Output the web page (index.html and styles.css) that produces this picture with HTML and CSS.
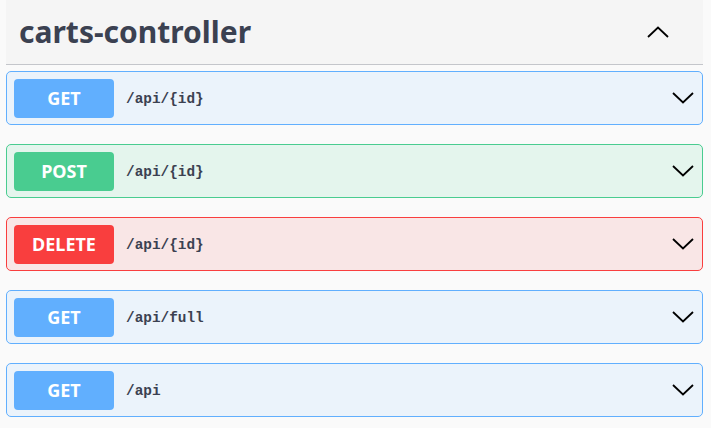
FILE: index.html
```html
<!DOCTYPE html>
<html>
<head>
<meta charset="utf-8">
<link rel="stylesheet" href="styles.css">
</head>
<body>
<div class="tag-section">
  <h3 class="tag-header">
    <span class="tag-name">carts-controller</span>
    <svg class="arrow-up" width="22" height="12" viewBox="0 0 22 12"><polyline points="1,11 11,1.5 21,11" fill="none" stroke="#000" stroke-width="1.8"/></svg>
  </h3>
  <div class="ops">
    <div class="opblock get">
      <span class="method">GET</span>
      <span class="path">/api/{id}</span>
      <svg class="arrow" width="22" height="12" viewBox="0 0 22 12"><polyline points="1,1 11,10.5 21,1" fill="none" stroke="#000" stroke-width="1.8"/></svg>
    </div>
    <div class="opblock post">
      <span class="method">POST</span>
      <span class="path">/api/{id}</span>
      <svg class="arrow" width="22" height="12" viewBox="0 0 22 12"><polyline points="1,1 11,10.5 21,1" fill="none" stroke="#000" stroke-width="1.8"/></svg>
    </div>
    <div class="opblock delete">
      <span class="method">DELETE</span>
      <span class="path">/api/{id}</span>
      <svg class="arrow" width="22" height="12" viewBox="0 0 22 12"><polyline points="1,1 11,10.5 21,1" fill="none" stroke="#000" stroke-width="1.8"/></svg>
    </div>
    <div class="opblock get">
      <span class="method">GET</span>
      <span class="path">/api/full</span>
      <svg class="arrow" width="22" height="12" viewBox="0 0 22 12"><polyline points="1,1 11,10.5 21,1" fill="none" stroke="#000" stroke-width="1.8"/></svg>
    </div>
    <div class="opblock get">
      <span class="method">GET</span>
      <span class="path">/api</span>
      <svg class="arrow" width="22" height="12" viewBox="0 0 22 12"><polyline points="1,1 11,10.5 21,1" fill="none" stroke="#000" stroke-width="1.8"/></svg>
    </div>
  </div>
</div>
</body>
</html>
```
FILE: styles.css
```css
html, body {
  margin: 0;
  padding: 0;
  background: #fafafa;
}
.tag-section {
  padding: 0 8px 0 6px;
}
.tag-header {
  margin: 0;
  height: 65px;
  box-sizing: border-box;
  display: flex;
  align-items: center;
  justify-content: space-between;
  background: #f5f5f5;
  border-bottom: 1px solid #c4c6cb;
  padding: 0 34px 1px 13px;
}
.tag-name {
  font-family: "Noto Sans", "Open Sans", sans-serif;
  font-weight: 700;
  font-size: 30px;
  color: #3b4151;
}
.arrow-up {
  display: block;
}
.ops {
  padding-top: 6px;
  display: flex;
  flex-direction: column;
  gap: 19px;
}
.opblock {
  display: flex;
  align-items: center;
  height: 54px;
  box-sizing: border-box;
  border: 1px solid;
  border-radius: 5px;
  padding: 0 8px 0 7px;
}
.opblock.get {
  background: #ebf3fb;
  border-color: #61affe;
}
.opblock.post {
  background: #e4f5ed;
  border-color: #49cc90;
}
.opblock.delete {
  background: #f9e6e6;
  border-color: #f93e3e;
}
.method {
  width: 100px;
  height: 39px;
  border-radius: 4px;
  display: flex;
  align-items: center;
  justify-content: center;
  color: #fff;
  font-family: "Noto Sans", "Open Sans", sans-serif;
  font-weight: 700;
  font-size: 18px;
}
.get .method { background: #61affe; }
.post .method { background: #49cc90; }
.delete .method { background: #f93e3e; }
.path {
  flex: 1;
  margin-left: 12px;
  padding-top: 2px;
  font-family: "Liberation Mono", "DejaVu Sans Mono", monospace;
  font-weight: 700;
  font-size: 14.4px;
  color: #3b4151;
}
.arrow {
  display: block;
}
```
